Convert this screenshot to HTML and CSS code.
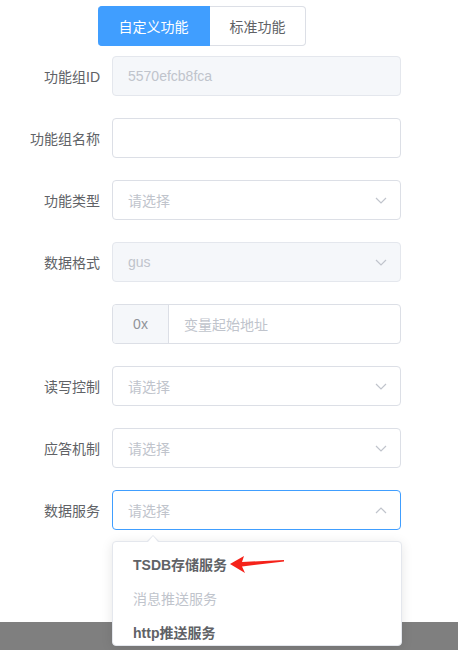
FILE: index.html
```html
<!DOCTYPE html>
<html lang="zh">
<head>
<meta charset="utf-8">
<link rel="stylesheet" href="styles.css">
</head>
<body>
<div class="page">
  <div class="tabs">
    <div class="tab tab-active">自定义功能</div>
    <div class="tab">标准功能</div>
  </div>
  <div class="form">
    <div class="row">
      <label class="label">功能组ID</label>
      <div class="input disabled"><span class="value">5570efcb8fca</span></div>
    </div>
    <div class="row">
      <label class="label">功能组名称</label>
      <div class="input"></div>
    </div>
    <div class="row">
      <label class="label">功能类型</label>
      <div class="input select"><span class="ph">请选择</span><svg class="chev" viewBox="0 0 12 7"><path d="M1 1 L6 6 L11 1"/></svg></div>
    </div>
    <div class="row">
      <label class="label">数据格式</label>
      <div class="input select disabled"><span class="value">gus</span><svg class="chev" viewBox="0 0 12 7"><path d="M1 1 L6 6 L11 1"/></svg></div>
    </div>
    <div class="row">
      <label class="label"></label>
      <div class="input group"><span class="prefix">0x</span><span class="ph ph-group">变量起始地址</span></div>
    </div>
    <div class="row">
      <label class="label">读写控制</label>
      <div class="input select"><span class="ph">请选择</span><svg class="chev" viewBox="0 0 12 7"><path d="M1 1 L6 6 L11 1"/></svg></div>
    </div>
    <div class="row">
      <label class="label">应答机制</label>
      <div class="input select"><span class="ph">请选择</span><svg class="chev" viewBox="0 0 12 7"><path d="M1 1 L6 6 L11 1"/></svg></div>
    </div>
    <div class="row">
      <label class="label">数据服务</label>
      <div class="input select focus"><span class="ph">请选择</span><svg class="chev" viewBox="0 0 12 7"><path d="M1 6 L6 1 L11 6"/></svg></div>
    </div>
  </div>
  <div class="footer"></div>
  <div class="dropdown">
    <div class="popper-arrow"></div>
    <ul class="options">
      <li class="option strong">TSDB存储服务</li>
      <li class="option disabled-opt">消息推送服务</li>
      <li class="option strong">http推送服务</li>
    </ul>
  </div>
  <svg class="red-arrow" viewBox="0 0 60 20" width="60" height="20">
    <path d="M1 8 L15 0 L13 6 L55 4 L55 5.5 L13 10.5 L16 17 Z" fill="#f5221a"/>
  </svg>
</div>
</body>
</html>
```
FILE: styles.css
```css
* { box-sizing: border-box; }
html, body { margin: 0; padding: 0; background: #fff; }
body {
  font-family: "Liberation Sans", "Noto Sans CJK SC", sans-serif;
  font-size: 14px;
  color: #606266;
  width: 458px;
  height: 650px;
  overflow: hidden;
}
.page { position: relative; height: 650px; display: flex; flex-direction: column; }
.tabs {
  display: flex;
  margin: 6px 0 0 98px;
  height: 40px;
}
.tab {
  width: 96px;
  height: 40px;
  display: flex;
  align-items: center;
  justify-content: center;
  border: 1px solid #dcdfe6;
  border-left: none;
  color: #606266;
  background: #fff;
  border-radius: 0 4px 4px 0;
}
.tab-active {
  width: 112px;
  background: #409eff;
  border-color: #409eff;
  color: #fff;
  border-radius: 4px 0 0 4px;
}
.form {
  margin-top: 10px;
  display: flex;
  flex-direction: column;
  gap: 22px;
}
.row { display: flex; align-items: center; height: 40px; }
.label {
  width: 112px;
  padding-right: 12px;
  text-align: right;
  color: #606266;
}
.input {
  width: 289px;
  height: 40px;
  border: 1px solid #dcdfe6;
  border-radius: 4px;
  background: #fff;
  display: flex;
  align-items: center;
  padding: 0 15px;
  position: relative;
}
.input.disabled { background: #f5f7fa; border-color: #e4e7ed; }
.input.disabled .value { color: #c0c4cc; }
.input.focus { border-color: #409eff; }
.ph { color: #c0c4cc; }
.select { justify-content: space-between; }
.chev {
  width: 12px;
  height: 7px;
  fill: none;
  stroke: #c0c4cc;
  stroke-width: 1.2;
  margin-right: -2px;
}
.group { padding: 0; }
.prefix {
  width: 56px;
  height: 100%;
  display: flex;
  align-items: center;
  justify-content: center;
  background: #f5f7fa;
  border-right: 1px solid #dcdfe6;
  color: #909399;
  border-radius: 4px 0 0 4px;
}
.ph-group { margin-left: 15px; }
.footer {
  margin-top: 92px;
  flex: 1;
  background: #7f7f7f;
}
.dropdown {
  position: absolute;
  left: 112px;
  top: 541px;
  width: 290px;
  height: 105px;
  background: #fff;
  border: 1px solid #e4e7ed;
  border-radius: 4px;
  box-shadow: 0 2px 12px 0 rgba(0,0,0,0.1);
}
.popper-arrow {
  position: absolute;
  left: 34px;
  top: -7px;
  width: 0; height: 0;
  border-left: 6px solid transparent;
  border-right: 6px solid transparent;
  border-bottom: 6px solid #e4e7ed;
}
.popper-arrow::after {
  content: "";
  position: absolute;
  left: -5px;
  top: 1px;
  border-left: 5px solid transparent;
  border-right: 5px solid transparent;
  border-bottom: 6px solid #fff;
}
.options { list-style: none; margin: 0; padding: 6px 0 0; overflow: hidden; height: 100%; }
.option {
  height: 34px;
  line-height: 34px;
  padding: 0 20px;
  color: #606266;
}
.option.strong { font-weight: bold; }
.disabled-opt { color: #c0c4cc; }
.red-arrow { position: absolute; left: 229px; top: 556px; }
```
